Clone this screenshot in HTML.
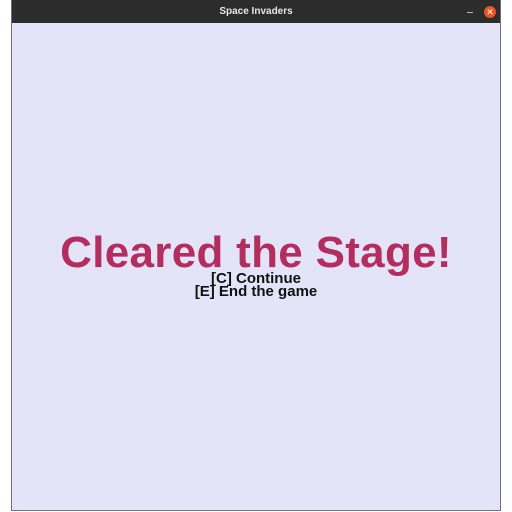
<!DOCTYPE html>
<html><head><style>
html,body{margin:0;padding:0;width:512px;height:512px;background:#fff;overflow:hidden;font-family:"Liberation Sans",Arial,sans-serif}
#win{position:absolute;left:11px;top:0;width:488px;height:510px;border:1px solid #6f6f78;border-top:none;background:#e4e4f8}
#bar{position:absolute;left:0;top:0;width:488px;height:23px;background:#2c2c2c;color:#e8e8e8;font-size:10px;font-weight:bold;text-align:center;line-height:23px}
#min{position:absolute;left:455px;top:12px;width:6px;height:1px;background:#bbb}
#cls{position:absolute;left:472px;top:6px;width:12px;height:12px;border-radius:50%;background:#e95420;color:#fff;font-size:9px;line-height:12px;text-align:center}
.t{position:absolute;left:0;width:488px;text-align:center;font-weight:bold;white-space:nowrap}
#big{top:228px;font-size:44px;color:#b32d5f;line-height:50px;letter-spacing:0.3px}
#s1{top:271px;font-size:15px;line-height:16px;color:#111}
#s2{top:284px;font-size:15px;line-height:16px;color:#111}
</style></head><body>
<div id="win">
<div id="bar">Space Invaders</div>
<div id="min"></div><div id="cls">✕</div>
<div class="t" id="big">Cleared the Stage!</div>
<div class="t" id="s1">[C] Continue</div>
<div class="t" id="s2">[E] End the game</div>
</div>
</body></html>
